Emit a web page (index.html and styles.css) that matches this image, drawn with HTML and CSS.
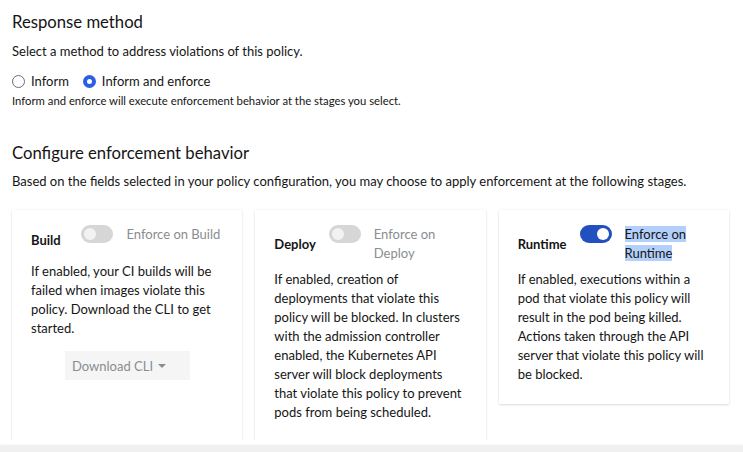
FILE: index.html
```html
<!DOCTYPE html>
<html lang="en">
<head>
<meta charset="utf-8">
<title>Policy response method</title>
<link rel="stylesheet" href="styles.css">
</head>
<body>
<main class="page">
  <section class="section">
    <h2 class="section-title">Response method</h2>
    <p class="section-desc">Select a method to address violations of this policy.</p>
    <div class="radio-row">
      <label class="radio"><span class="radio-dot"></span>Inform</label>
      <label class="radio"><span class="radio-dot is-checked"></span>Inform and enforce</label>
    </div>
    <p class="helper">Inform and enforce will execute enforcement behavior at the stages you select.</p>
  </section>

  <section class="section section-enforce">
    <h2 class="section-title">Configure enforcement behavior</h2>
    <p class="section-desc">Based on the fields selected in your policy configuration, you may choose to apply enforcement at the following stages.</p>

    <div class="cards">
      <article class="card">
        <header class="card-header">
          <h3 class="card-title">Build</h3>
          <div class="switch is-disabled">
            <span class="switch-track"><span class="switch-knob"></span></span>
            <span class="switch-label">Enforce on Build</span>
          </div>
        </header>
        <p class="card-body">If enabled, your CI builds will be failed when images violate this policy. Download the CLI to get started.</p>
        <div class="dropdown">
          <span class="dropdown-text">Download CLI</span>
          <span class="caret"></span>
        </div>
      </article>

      <article class="card">
        <header class="card-header">
          <h3 class="card-title">Deploy</h3>
          <div class="switch is-disabled">
            <span class="switch-track"><span class="switch-knob"></span></span>
            <span class="switch-label">Enforce on Deploy</span>
          </div>
        </header>
        <p class="card-body">If enabled, creation of deployments that violate this policy will be blocked. In clusters with the admission controller enabled, the Kubernetes API server will block deployments that violate this policy to prevent pods from being scheduled.</p>
      </article>

      <article class="card card-top">
        <header class="card-header">
          <h3 class="card-title">Runtime</h3>
          <div class="switch is-on">
            <span class="switch-track"><span class="switch-knob"></span></span>
            <span class="switch-label"><span class="selected">Enforce on Runtime</span></span>
          </div>
        </header>
        <p class="card-body">If enabled, executions within a pod that violate this policy will result in the pod being killed. Actions taken through the API server that violate this policy will be blocked.</p>
      </article>
    </div>
  </section>
</main>
<div class="footer-edge"></div>
</body>
</html>
```
FILE: styles.css
```css
html, body {
  margin: 0;
  padding: 0;
  background: #ffffff;
  overflow: hidden;
}

body {
  font-family: Lato, "Open Sans", sans-serif;
  color: #151515;
  font-size: 13px;
  line-height: 20px;
}

.page {
  padding: 11px 14px 0 12px;
}

.section-title {
  margin: 0;
  font-size: 16.7px;
  line-height: 22px;
  font-weight: 400;
}

.section-desc {
  margin: 8px 0 0;
  font-size: 13px;
  line-height: 20px;
}

.radio-row {
  display: flex;
  gap: 14px;
  margin-top: 10px;
  height: 20px;
  align-items: center;
}

.radio {
  display: flex;
  align-items: center;
  gap: 6px;
  font-size: 13px;
}

.radio-dot {
  width: 13px;
  height: 13px;
  box-sizing: border-box;
  border: 1px solid #6a6e73;
  border-radius: 50%;
  background: #fff;
}

.radio-dot.is-checked {
  border: 4px solid #2b5ee5;
  background: #fff;
}

.helper {
  margin: 2px 0 0;
  font-size: 11.3px;
  line-height: 16px;
}

.section-enforce {
  margin-top: 33px;
}

.section-enforce .section-desc {
  margin-top: 7px;
}

.cards {
  display: grid;
  grid-template-columns: repeat(3, 1fr);
  gap: 13px;
  margin-top: 19px;
}

.card {
  background: #fff;
  box-shadow: 0 1px 2px rgba(3, 3, 3, 0.12), 0 0 2px rgba(3, 3, 3, 0.06);
  padding: 15px 22px 18px 19px;
}

.card-top {
  align-self: start;
  padding-bottom: 20px;
}

.card-header {
  display: flex;
  justify-content: space-between;
  gap: 13px;
  min-height: 30px;
}

.card-title {
  margin: 0;
  flex: none;
  align-self: center;
  font-size: 13px;
  font-weight: 700;
  line-height: 19px;
}

.switch {
  display: flex;
  align-items: flex-start;
  gap: 13px;
}

.switch-track {
  flex: none;
  position: relative;
  width: 32px;
  height: 18px;
  border-radius: 9px;
  background: #d2d2d2;
}

.switch-knob {
  position: absolute;
  top: 3px;
  left: 3px;
  width: 12px;
  height: 12px;
  border-radius: 50%;
  background: #f2f2f2;
}

.is-disabled .switch-track {
  background: #d6d6d6;
}

.is-on .switch-track {
  background: #244fc1;
}

.is-on .switch-knob {
  left: auto;
  right: 3px;
  background: #fff;
}

.switch-label {
  font-size: 13px;
  line-height: 19px;
}

.is-disabled .switch-label {
  color: #8a8d90;
}

.selected {
  background: #b3d0fb;
}

.card-body {
  margin: 7px 0 0;
  font-size: 13px;
  line-height: 19px;
}

.dropdown {
  display: flex;
  align-items: center;
  justify-content: space-between;
  width: 125px;
  height: 29px;
  box-sizing: border-box;
  margin: 13px 0 0 34px;
  padding: 0 24px 0 7px;
  background: #f5f5f5;
  color: #8a8d90;
  font-size: 13px;
}

.caret {
  flex: none;
  width: 0;
  height: 0;
  border-left: 4px solid transparent;
  border-right: 4px solid transparent;
  border-top: 4px solid #8a8d90;
}

.footer-edge {
  position: fixed;
  left: 0;
  right: 0;
  bottom: 0;
  height: 6px;
  background: #f0f0f0;
  box-shadow: 0 -1px 2px rgba(3, 3, 3, 0.08);
}
```
